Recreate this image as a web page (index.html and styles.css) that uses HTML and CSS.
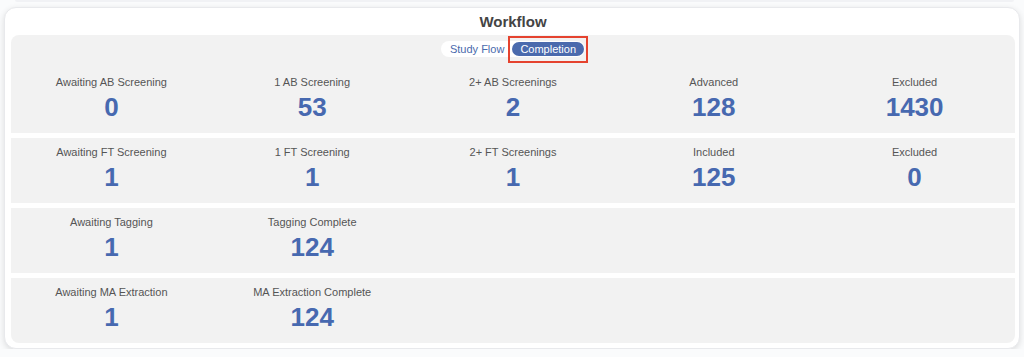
FILE: index.html
```html
<!DOCTYPE html>
<html lang="en">
<head>
    <meta charset="UTF-8">
    <meta name="viewport" content="width=device-width, initial-scale=1.0">
    <title>Workflow</title>
    <link rel="stylesheet" href="styles.css">
</head>
<body>
    <div class="prev-card"></div>
    <div class="card">
        <h2 class="card-title">Workflow</h2>
        <div class="stages">
            <div class="stage stage-first">
                <div class="toggle-row">
                    <div class="toggle">
                        <button class="toggle-option">Study Flow</button>
                        <button class="toggle-option active">Completion</button>
                    </div>
                </div>
                <div class="stats">
                    <div class="stat"><span class="stat-label">Awaiting AB Screening</span><span class="stat-value">0</span></div>
                    <div class="stat"><span class="stat-label">1 AB Screening</span><span class="stat-value">53</span></div>
                    <div class="stat"><span class="stat-label">2+ AB Screenings</span><span class="stat-value">2</span></div>
                    <div class="stat"><span class="stat-label">Advanced</span><span class="stat-value">128</span></div>
                    <div class="stat"><span class="stat-label">Excluded</span><span class="stat-value">1430</span></div>
                </div>
            </div>
            <div class="stage">
                <div class="stats">
                    <div class="stat"><span class="stat-label">Awaiting FT Screening</span><span class="stat-value">1</span></div>
                    <div class="stat"><span class="stat-label">1 FT Screening</span><span class="stat-value">1</span></div>
                    <div class="stat"><span class="stat-label">2+ FT Screenings</span><span class="stat-value">1</span></div>
                    <div class="stat"><span class="stat-label">Included</span><span class="stat-value">125</span></div>
                    <div class="stat"><span class="stat-label">Excluded</span><span class="stat-value">0</span></div>
                </div>
            </div>
            <div class="stage">
                <div class="stats">
                    <div class="stat"><span class="stat-label">Awaiting Tagging</span><span class="stat-value">1</span></div>
                    <div class="stat"><span class="stat-label">Tagging Complete</span><span class="stat-value">124</span></div>
                </div>
            </div>
            <div class="stage stage-last">
                <div class="stats">
                    <div class="stat"><span class="stat-label">Awaiting MA Extraction</span><span class="stat-value">1</span></div>
                    <div class="stat"><span class="stat-label">MA Extraction Complete</span><span class="stat-value">124</span></div>
                </div>
            </div>
        </div>
    </div>
</body>
</html>
```

FILE: styles.css
```css
body {
    font-family: 'Liberation Sans', Arial, sans-serif;
    margin: 0;
    padding: 0;
    background-color: #fafbfc;
    color: #555;
}
.prev-card {
    height: 2px;
    margin: 0 10px 0 15px;
    background-color: #f1f2f5;
    border-radius: 0 0 8px 8px;
}
.card {
    box-sizing: border-box;
    width: 1016px;
    margin: 5px 0 0 4px;
    padding: 0 4px 5px 6px;
    background-color: #fff;
    border: 1px solid #e8e9ec;
    border-radius: 12px;
    box-shadow: 0 2px 6px rgba(0, 0, 0, 0.12);
}
.card-title {
    margin: 0;
    height: 27px;
    line-height: 27px;
    text-align: center;
    font-size: 15px;
    font-weight: 700;
    color: #444;
}
.stages {
    display: flex;
    flex-direction: column;
    gap: 5px;
}
.stage {
    background-color: #f2f2f2;
}
.stage-first {
    border-radius: 8px 8px 0 0;
}
.stage-last {
    border-radius: 0 0 8px 8px;
}
.toggle-row {
    display: flex;
    justify-content: center;
    padding: 6px 0 11px;
}
.toggle {
    display: inline-flex;
    padding: 1px;
    background-color: #fff;
    border-radius: 8px;
}
.toggle-option {
    position: relative;
    padding: 0 8px;
    height: 14px;
    line-height: 14px;
    font-family: inherit;
    font-size: 11px;
    color: #4a6aad;
    background: none;
    border: none;
    border-radius: 7px;
    cursor: pointer;
}
.toggle-option.active {
    background-color: #4a6aad;
    color: #fff;
}
/* annotation box around the active option */
.toggle-option.active::after {
    content: '';
    position: absolute;
    top: -6px;
    bottom: -7px;
    left: -4px;
    right: -4px;
    border: 2px solid #e5432f;
}
.stats {
    display: grid;
    grid-template-columns: repeat(5, 1fr);
    padding: 7px 0 12px;
}
.stat {
    display: flex;
    flex-direction: column;
    align-items: center;
}
.stat-label {
    font-size: 11px;
    line-height: 14px;
    color: #555;
}
.stat-value {
    margin-top: 4px;
    font-size: 26px;
    line-height: 28px;
    font-weight: 700;
    color: #4769b0;
}
```
